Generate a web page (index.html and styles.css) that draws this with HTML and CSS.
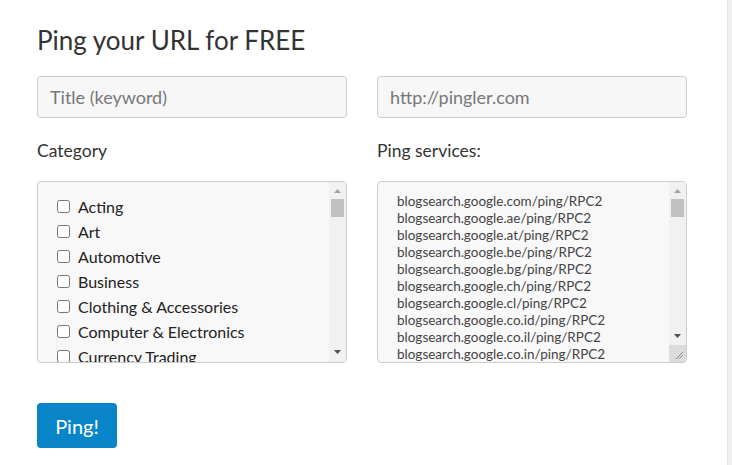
FILE: index.html
```html
<!DOCTYPE html>
<html>
<head>
<meta charset="utf-8">
<link rel="stylesheet" href="styles.css">
</head>
<body>
<div class="page">
  <main class="main">
    <h1 class="title">Ping your URL for FREE</h1>
    <form class="form">
      <div class="row">
        <input class="field" type="text" placeholder="Title (keyword)">
        <input class="field" type="text" placeholder="http://pingler.com">
      </div>
      <div class="row">
        <div class="col">
          <label class="label">Category</label>
          <div class="boxwrap">
            <div class="box checklist">
              <label class="check"><input type="checkbox"> Acting</label>
              <label class="check"><input type="checkbox"> Art</label>
              <label class="check"><input type="checkbox"> Automotive</label>
              <label class="check"><input type="checkbox"> Business</label>
              <label class="check"><input type="checkbox"> Clothing &amp; Accessories</label>
              <label class="check"><input type="checkbox"> Computer &amp; Electronics</label>
              <label class="check"><input type="checkbox"> Currency Trading</label>
            </div>
            <div class="sbar">
              <svg class="arr up" width="7" height="4" viewBox="0 0 7 4"><path d="M0 4 L3.5 0 L7 4 Z" fill="#a3a3a3"/></svg>
              <div class="thumb"></div>
              <div class="spacer"></div>
              <svg class="arr down" width="7" height="4" viewBox="0 0 7 4"><path d="M0 0 L7 0 L3.5 4 Z" fill="#505050"/></svg>
            </div>
          </div>
        </div>
        <div class="col">
          <label class="label">Ping services:</label>
          <div class="boxwrap">
            <textarea class="box services">blogsearch.google.com/ping/RPC2
blogsearch.google.ae/ping/RPC2
blogsearch.google.at/ping/RPC2
blogsearch.google.be/ping/RPC2
blogsearch.google.bg/ping/RPC2
blogsearch.google.ch/ping/RPC2
blogsearch.google.cl/ping/RPC2
blogsearch.google.co.id/ping/RPC2
blogsearch.google.co.il/ping/RPC2
blogsearch.google.co.in/ping/RPC2</textarea>
            <div class="sbar short">
              <svg class="arr up" width="7" height="4" viewBox="0 0 7 4"><path d="M0 4 L3.5 0 L7 4 Z" fill="#a3a3a3"/></svg>
              <div class="thumb"></div>
              <div class="spacer"></div>
              <svg class="arr down" width="7" height="4" viewBox="0 0 7 4"><path d="M0 0 L7 0 L3.5 4 Z" fill="#505050"/></svg>
            </div>
            <div class="resizer">
              <svg width="17" height="17" viewBox="0 0 17 17"><path d="M7 14 L14 7 M10 14 L14 10" stroke="#8a8a8a" stroke-width="1" fill="none"/></svg>
            </div>
          </div>
        </div>
      </div>
      <button class="btn" type="button">Ping!</button>
    </form>
  </main>
  <div class="edge"></div>
</div>
</body>
</html>
```

FILE: styles.css
```css
html, body {
  margin: 0;
  padding: 0;
  height: 100%;
  background: #fff;
}
body {
  font-family: Lato, "Liberation Sans", sans-serif;
  color: #333;
  overflow: hidden;
}
.page {
  display: flex;
  height: 465px;
}
.main {
  flex: 1;
  padding: 24px 0 0 37px;
}
.edge {
  width: 4px;
  background: #f0f0f0;
  border-left: 1px solid #e2e2e2;
}
.title {
  margin: 0 0 20px;
  font-size: 26px;
  font-weight: 400;
  line-height: 32px;
  color: #333;
}
.form {
  display: flex;
  flex-direction: column;
  width: 650px;
}
.row {
  display: flex;
  gap: 30px;
}
.field {
  box-sizing: border-box;
  width: 310px;
  height: 42px;
  border: 1px solid #ccc;
  border-radius: 4px;
  background: #f7f7f7;
  padding: 0 12px;
  font-family: Lato, "Liberation Sans", sans-serif;
  font-size: 18px;
  color: #555;
  outline: none;
}
.field::placeholder {
  color: #777;
}
.col {
  display: flex;
  flex-direction: column;
  width: 310px;
}
.label {
  margin: 21px 0 18px;
  font-size: 17.5px;
  line-height: 24px;
  height: 24px;
  color: #333;
}
.boxwrap {
  position: relative;
  width: 310px;
  height: 182px;
}
.box {
  box-sizing: border-box;
  display: block;
  width: 310px;
  height: 182px;
  border: 1px solid #ccc;
  border-radius: 4px;
  background: #f8f8f8;
  margin: 0;
  overflow: hidden;
}
.checklist {
  padding: 12px 17px 0 19px;
  display: flex;
  flex-direction: column;
}
.check {
  display: flex;
  align-items: center;
  height: 25px;
  flex: none;
  font-size: 16px;
  color: #222;
  gap: 8px;
}
.check input {
  margin: 0;
  width: 13px;
  height: 13px;
}
.services {
  resize: none;
  padding: 11px 19px 0;
  font-family: Lato, "Liberation Sans", sans-serif;
  font-size: 13.5px;
  line-height: 17px;
  color: #444;
  outline: none;
}
.sbar {
  position: absolute;
  top: 1px;
  right: 1px;
  bottom: 1px;
  width: 17px;
  background: #f1f1f1;
  display: flex;
  flex-direction: column;
  align-items: center;
  border-radius: 0 3px 3px 0;
}
.sbar.short {
  bottom: 18px;
  border-radius: 0 3px 0 0;
}
.arr {
  flex: none;
  display: block;
}
.arr.up {
  margin-top: 7px;
}
.thumb {
  flex: none;
  width: 13px;
  height: 18px;
  margin-top: 6px;
  background: #c1c1c1;
}
.spacer {
  flex: 1;
}
.arr.down {
  margin-bottom: 8px;
}
.sbar.short .arr.down {
  margin-bottom: 7px;
}
.resizer {
  position: absolute;
  right: 1px;
  bottom: 1px;
  width: 17px;
  height: 17px;
  background: #dcdcdc;
  border-radius: 0 0 3px 0;
}
.resizer svg {
  display: block;
}
.btn {
  margin-top: 40px;
  align-self: flex-start;
  width: 80px;
  height: 45px;
  border: none;
  border-radius: 4px;
  background: #0884c8;
  color: #fff;
  font-family: Lato, "Liberation Sans", sans-serif;
  font-size: 20px;
  padding: 0;
  cursor: pointer;
}
```
